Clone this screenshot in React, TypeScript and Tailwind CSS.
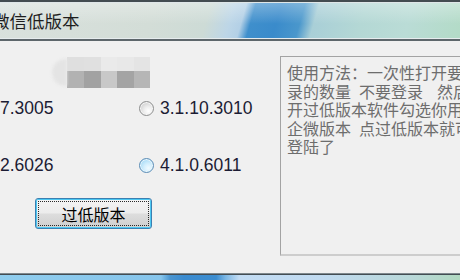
import React from "react";

const cjk = "font-['Noto_Sans_CJK_SC',sans-serif]";
const latin = "font-['Liberation_Sans','Noto_Sans_CJK_SC',sans-serif]";

function Radio({ hover }: { hover?: boolean }) {
  if (hover) {
    return (
      <span className="block w-[15px] h-[15px] shrink-0 rounded-full border border-[#5b8db6] shadow-[inset_0_0_0_1px_#eaf6fd] bg-[radial-gradient(circle_at_65%_70%,#f0faff_0%,#d4effd_35%,#a9dcf7_75%,#8ccbee_100%)]" />
    );
  }
  return (
    <span className="block w-[15px] h-[15px] shrink-0 rounded-full border border-[#8e8f8f] shadow-[inset_0_0_0_1px_#f6f6f6] bg-[radial-gradient(circle_at_65%_70%,#ffffff_0%,#eeeeee_35%,#d2d2d2_75%,#c2c2c2_100%)]" />
  );
}

function VersionRow({ left, right, hover }: { left: string; right: string; hover?: boolean }) {
  return (
    <div className={`flex items-center h-[20px] leading-[20px] text-[17.5px] text-[#1c1c34] ${latin}`}>
      <span className="w-[139px] shrink-0 whitespace-nowrap">{left}</span>
      <Radio hover={hover} />
      <span className="ml-[6px] whitespace-nowrap">{right}</span>
    </div>
  );
}

function Mosaic() {
  return (
    <div className="flex ml-[52px] h-[31px]">
      <div className="w-[15px] h-[27px] mt-[2px] rounded-l-full bg-[#e4e4e4] blur-[1.5px]" />
      <div className="grid grid-cols-[17px_17px_16px_17px_16px] grid-rows-[14px_17px]">
        <div className="bg-[#dfdfdf]" />
        <div className="bg-[#e0e0e0]" />
        <div className="bg-[#eaeaea]" />
        <div className="bg-[#e8e8e8]" />
        <div className="bg-[#e4e4e4]" />
        <div className="bg-[#b2b2b2]" />
        <div className="bg-[#a2a2a2]" />
        <div className="bg-[#c8c8c8]" />
        <div className="bg-[#a4a4a4]" />
        <div className="bg-[#b6b6b6]" />
      </div>
    </div>
  );
}

export default function App() {
  return (
    <div className="w-[460px] h-[280px] overflow-hidden flex flex-col bg-[#f0f0f0]">
      {/* title bar */}
      <div className="h-[41px] shrink-0 flex flex-col">
        <div className="h-[2px] bg-[#434c51]" />
        <div className="h-px bg-[#dfe6e8]" />
        <div className="flex-1 flex items-center bg-[linear-gradient(to_bottom,rgba(255,255,255,0.3),rgba(255,255,255,0)_60%),linear-gradient(106deg,#d9e1dd_0%,#d3ddd7_33%,#cddbd6_45%,#bdd6e7_50%,#b3d0e6_52.5%,#3f8fcc_54.5%,#3a8bcb_60%,#4a97cc_65%,#a9cfd7_68%,#b4d8d5_78%,#badcd6_88%,#b3dbc7_100%)]">
          <span className={`ml-[-8px] pt-[1px] text-[17.5px] leading-[22px] text-[#1e1e1e] whitespace-nowrap ${cjk}`}>
            微信低版本
          </span>
        </div>
        <div className="h-px bg-[#e6ecee]" />
        <div className="h-[2px] bg-[#5d666b]" />
      </div>

      {/* client area */}
      <div className="flex-1 flex">
        <div className="w-[280px] shrink-0 flex flex-col">
          <div className="mt-[16px]">
            <Mosaic />
          </div>
          <div className="mt-[10px]">
            <VersionRow left="7.3005" right="3.1.10.3010" />
          </div>
          <div className="mt-[37px]">
            <VersionRow left="2.6026" right="4.1.0.6011" hover />
          </div>
          <button
            type="button"
            className="mt-[23px] ml-[35px] w-[117px] h-[31px] flex p-[2px] rounded-[3px] border border-[#3c7fb1] shadow-[inset_0_0_0_1px_#4cc8f2] bg-[linear-gradient(to_bottom,#f4f4f4_0%,#ececec_48%,#dddddd_52%,#cfcfcf_100%)]"
          >
            <span
              className={`flex-1 flex items-center justify-center pt-[1px] border border-dotted border-[#2a2a2a] text-[16px] leading-[20px] text-black ${cjk}`}
            >
              过低版本
            </span>
          </button>
        </div>

        <div className="mt-[15px] w-[200px] h-[200px] shrink-0 border-t border-l border-[#a3a3a3] border-b-2 border-b-[#cdcdcd] pl-[6px] pt-[6px]">
          <div className={`text-[16px] leading-[18.5px] text-[#6d6d6d] whitespace-nowrap ${cjk}`}>
            <div>使用方法：一次性打开要登</div>
            <div>
              录的数量<span className="inline-block w-[8px]" />不要登录<span className="inline-block w-[14px]" />然后打
            </div>
            <div>开过低版本软件勾选你用的</div>
            <div>
              企微版本<span className="inline-block w-[8px]" />点过低版本就可
            </div>
            <div>登陆了</div>
          </div>
        </div>
      </div>

      {/* bottom edge of next window */}
      <div className="h-px shrink-0 bg-[#7f898e]" />
      <div className="h-px shrink-0 bg-[#434d53]" />
      <div className="h-[5px] shrink-0 bg-[linear-gradient(90deg,#8fcdee_0%,#86c5ec_35%,#4a95d0_37%,#3a8bd0_40%,#3c8dd0_47%,#7ab6e4_49%,#c2dcf4_52%,#c0daf0_70%,#b8d8d8_90%,#b0d8c0_100%)]" />
    </div>
  );
}
